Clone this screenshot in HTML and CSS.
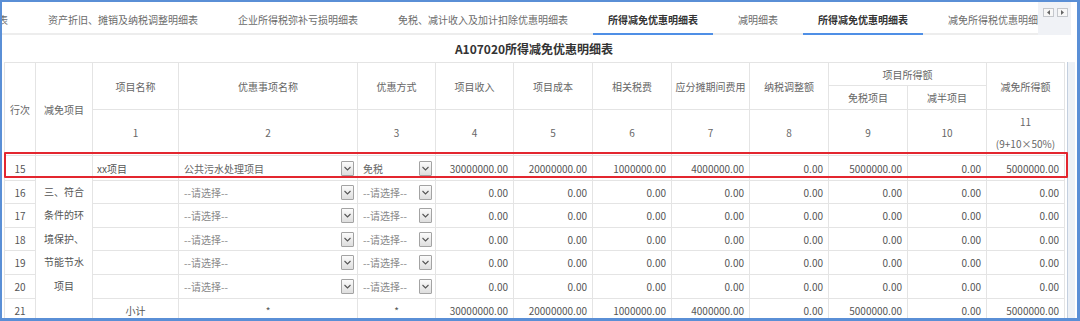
FILE: index.html
```html
<!DOCTYPE html>
<html lang="zh-CN">
<head>
<meta charset="utf-8">
<title>A107020所得减免优惠明细表</title>
<link rel="stylesheet" href="styles.css">
</head>
<body>
<div class="frame">
  <div class="tabs">
    <div class="tab-list">
      <div class="tab-track">
        <div class="tab">纳税调整明细表</div>
        <div class="tab">资产折旧、摊销及纳税调整明细表</div>
        <div class="tab">企业所得税弥补亏损明细表</div>
        <div class="tab">免税、减计收入及加计扣除优惠明细表</div>
        <div class="tab active">所得减免优惠明细表</div>
        <div class="tab">减明细表</div>
        <div class="tab active">所得减免优惠明细表</div>
        <div class="tab">减免所得税优惠明细表</div>
      </div>
    </div>
    <div class="tab-nav">
      <span class="nav-btn"><svg width="9" height="7" viewBox="0 0 9 7"><polygon points="6,1 6,6 3,3.5" fill="#666"/></svg></span>
      <span class="nav-btn"><svg width="9" height="7" viewBox="0 0 9 7"><polygon points="3,1 3,6 6,3.5" fill="#666"/></svg></span>
    </div>
  </div>
  <div class="body">
    <div class="main">
      <div class="title">A107020所得减免优惠明细表</div>
      <div class="table-wrap">
        <table class="grid">
          <colgroup>
            <col class="w31"><col class="w57"><col class="w86"><col class="w179"><col class="w78">
            <col class="w78"><col class="w79"><col class="w79"><col class="w78"><col class="w79">
            <col class="w79"><col class="w79"><col class="w78">
          </colgroup>
          <thead>
            <tr class="ha">
              <th rowspan="3">行次</th>
              <th rowspan="3">减免项目</th>
              <th rowspan="2">项目名称</th>
              <th rowspan="2">优惠事项名称</th>
              <th rowspan="2">优惠方式</th>
              <th rowspan="2">项目收入</th>
              <th rowspan="2">项目成本</th>
              <th rowspan="2">相关税费</th>
              <th rowspan="2">应分摊期间费用</th>
              <th rowspan="2">纳税调整额</th>
              <th colspan="2">项目所得额</th>
              <th rowspan="2">减免所得额</th>
            </tr>
            <tr class="hb">
              <th>免税项目</th>
              <th>减半项目</th>
            </tr>
            <tr class="hc">
              <th>1</th><th>2</th><th>3</th><th>4</th><th>5</th><th>6</th><th>7</th><th>8</th><th>9</th><th>10</th>
              <th class="two">11<br>(9+10×50%)</th>
            </tr>
          </thead>
          <tbody>
            <tr class="r15">
              <td>15</td>
              <td rowspan="7" class="cat">三、符合<br>条件的环<br>境保护、<br>节能节水<br>项目</td>
              <td class="txt">xx项目</td>
              <td><div class="sel"><span>公共污水处理项目</span><span class="dd"><svg width="11" height="13" viewBox="0 0 11 13"><polyline points="2.5,5 5.5,8 8.5,5" fill="none" stroke="#555" stroke-width="1.1"/></svg></span></div></td>
              <td><div class="sel"><span>免税</span><span class="dd"><svg width="11" height="13" viewBox="0 0 11 13"><polyline points="2.5,5 5.5,8 8.5,5" fill="none" stroke="#555" stroke-width="1.1"/></svg></span></div></td>
              <td class="num">30000000.00</td>
              <td class="num">20000000.00</td>
              <td class="num">1000000.00</td>
              <td class="num">4000000.00</td>
              <td class="num">0.00</td>
              <td class="num">5000000.00</td>
              <td class="num">0.00</td>
              <td class="num">5000000.00</td>
            </tr>
            <tr class="rb">
              <td>16</td>
              <td></td>
              <td><div class="sel ph"><span>--请选择--</span><span class="dd"><svg width="11" height="13" viewBox="0 0 11 13"><polyline points="2.5,5 5.5,8 8.5,5" fill="none" stroke="#555" stroke-width="1.1"/></svg></span></div></td>
              <td><div class="sel ph"><span>--请选择--</span><span class="dd"><svg width="11" height="13" viewBox="0 0 11 13"><polyline points="2.5,5 5.5,8 8.5,5" fill="none" stroke="#555" stroke-width="1.1"/></svg></span></div></td>
              <td class="num">0.00</td><td class="num">0.00</td><td class="num">0.00</td><td class="num">0.00</td>
              <td class="num">0.00</td><td class="num">0.00</td><td class="num">0.00</td><td class="num">0.00</td>
            </tr>
            <tr class="ra">
              <td>17</td>
              <td></td>
              <td><div class="sel ph"><span>--请选择--</span><span class="dd"><svg width="11" height="13" viewBox="0 0 11 13"><polyline points="2.5,5 5.5,8 8.5,5" fill="none" stroke="#555" stroke-width="1.1"/></svg></span></div></td>
              <td><div class="sel ph"><span>--请选择--</span><span class="dd"><svg width="11" height="13" viewBox="0 0 11 13"><polyline points="2.5,5 5.5,8 8.5,5" fill="none" stroke="#555" stroke-width="1.1"/></svg></span></div></td>
              <td class="num">0.00</td><td class="num">0.00</td><td class="num">0.00</td><td class="num">0.00</td>
              <td class="num">0.00</td><td class="num">0.00</td><td class="num">0.00</td><td class="num">0.00</td>
            </tr>
            <tr class="rb">
              <td>18</td>
              <td></td>
              <td><div class="sel ph"><span>--请选择--</span><span class="dd"><svg width="11" height="13" viewBox="0 0 11 13"><polyline points="2.5,5 5.5,8 8.5,5" fill="none" stroke="#555" stroke-width="1.1"/></svg></span></div></td>
              <td><div class="sel ph"><span>--请选择--</span><span class="dd"><svg width="11" height="13" viewBox="0 0 11 13"><polyline points="2.5,5 5.5,8 8.5,5" fill="none" stroke="#555" stroke-width="1.1"/></svg></span></div></td>
              <td class="num">0.00</td><td class="num">0.00</td><td class="num">0.00</td><td class="num">0.00</td>
              <td class="num">0.00</td><td class="num">0.00</td><td class="num">0.00</td><td class="num">0.00</td>
            </tr>
            <tr class="ra">
              <td>19</td>
              <td></td>
              <td><div class="sel ph"><span>--请选择--</span><span class="dd"><svg width="11" height="13" viewBox="0 0 11 13"><polyline points="2.5,5 5.5,8 8.5,5" fill="none" stroke="#555" stroke-width="1.1"/></svg></span></div></td>
              <td><div class="sel ph"><span>--请选择--</span><span class="dd"><svg width="11" height="13" viewBox="0 0 11 13"><polyline points="2.5,5 5.5,8 8.5,5" fill="none" stroke="#555" stroke-width="1.1"/></svg></span></div></td>
              <td class="num">0.00</td><td class="num">0.00</td><td class="num">0.00</td><td class="num">0.00</td>
              <td class="num">0.00</td><td class="num">0.00</td><td class="num">0.00</td><td class="num">0.00</td>
            </tr>
            <tr class="ra">
              <td>20</td>
              <td></td>
              <td><div class="sel ph"><span>--请选择--</span><span class="dd"><svg width="11" height="13" viewBox="0 0 11 13"><polyline points="2.5,5 5.5,8 8.5,5" fill="none" stroke="#555" stroke-width="1.1"/></svg></span></div></td>
              <td><div class="sel ph"><span>--请选择--</span><span class="dd"><svg width="11" height="13" viewBox="0 0 11 13"><polyline points="2.5,5 5.5,8 8.5,5" fill="none" stroke="#555" stroke-width="1.1"/></svg></span></div></td>
              <td class="num">0.00</td><td class="num">0.00</td><td class="num">0.00</td><td class="num">0.00</td>
              <td class="num">0.00</td><td class="num">0.00</td><td class="num">0.00</td><td class="num">0.00</td>
            </tr>
            <tr class="rb">
              <td>21</td>
              <td>小计</td>
              <td>*</td>
              <td>*</td>
              <td class="num">30000000.00</td>
              <td class="num">20000000.00</td>
              <td class="num">1000000.00</td>
              <td class="num">4000000.00</td>
              <td class="num">0.00</td>
              <td class="num">5000000.00</td>
              <td class="num">0.00</td>
              <td class="num">5000000.00</td>
            </tr>
          </tbody>
        </table>
        <div class="hl"></div>
      </div>
    </div>
    <div class="vscroll"><div class="track"></div></div>
  </div>
</div>
</body>
</html>
```
FILE: styles.css
```css
html, body {
  margin: 0;
  padding: 0;
  background: #fff;
}
body {
  font-family: "Noto Sans CJK SC", "Noto Sans", "DejaVu Sans", sans-serif;
  font-size: 10px;
  color: #666;
}
.frame {
  width: 1080px;
  height: 321px;
  box-sizing: border-box;
  border-style: solid;
  border-color: #5a8fd6;
  border-width: 2px 3px 3px 2px;
  overflow: hidden;
  display: flex;
  flex-direction: column;
}

/* tabs */
.tabs {
  flex: none;
  height: 33px;
  display: flex;
  padding-right: 6px;
}
.tab-list {
  flex: 1;
  min-width: 0;
  overflow: hidden;
  box-shadow: inset 0 -2px 0 #ededed;
}
.tab-track {
  display: flex;
  gap: 10px;
  margin-left: -79px;
  white-space: nowrap;
}
.tab {
  flex: none;
  height: 33px;
  box-sizing: border-box;
  padding: 4px 15px 0;
  line-height: 27px;
  border-bottom: 2px solid transparent;
  color: #6b6b6b;
}
.tab.active {
  color: #333;
  font-weight: bold;
  border-bottom-color: #4f8fe6;
}
.tab-nav {
  flex: none;
  width: 33px;
  box-sizing: border-box;
  background: #f0f2f6;
  display: flex;
  align-items: flex-start;
  gap: 3px;
  padding: 6px 3px 0 5px;
}
.nav-btn {
  width: 11px;
  height: 9px;
  box-sizing: border-box;
  border: 1px solid #c4c7cc;
  background: #f7f7f7;
  display: flex;
  align-items: center;
  justify-content: center;
}
.nav-btn svg { display: block; }

/* body */
.body {
  flex: 1;
  min-height: 0;
  display: flex;
}
.main {
  flex: none;
  width: 1062px;
  box-sizing: border-box;
  padding-left: 2px;
}
.title {
  height: 27px;
  line-height: 27px;
  text-align: center;
  font-size: 12px;
  font-weight: bold;
  color: #333;
}
.table-wrap {
  position: relative;
}
.grid {
  width: 1060px;
  table-layout: fixed;
  border-collapse: collapse;
}
.w31 { width: 31px; }
.w57 { width: 57px; }
.w86 { width: 86px; }
.w179 { width: 179px; }
.w78 { width: 78px; }
.w79 { width: 79px; }
.grid th, .grid td {
  border: 1px solid #e4e4e4;
  padding: 0;
  font-weight: normal;
  text-align: center;
  white-space: nowrap;
  overflow: hidden;
  color: #666;
}
.grid td { color: #555; }
.ha { height: 23px; }
.hb { height: 24px; }
.hc { height: 43px; }
.grid th.two {
  line-height: 22px;
  padding-top: 1px;
}
.r15 { height: 25px; }
.ra { height: 24px; }
.rb { height: 23px; }
.grid td.num {
  text-align: right;
  padding-right: 5px;
}
.grid td.txt {
  text-align: left;
  padding-left: 4px;
}
.grid td.cat {
  white-space: normal;
  line-height: 23.4px;
  vertical-align: middle;
}
.sel {
  display: flex;
  align-items: center;
  justify-content: space-between;
  padding: 0 3px 0 5px;
  color: #666;
}
.sel.ph { color: #888; }
.dd {
  width: 13px;
  height: 15px;
  box-sizing: border-box;
  border: 1px solid #a3a3a3;
  border-radius: 1px;
  background: linear-gradient(#fbfbfb, #dedede);
  display: flex;
  align-items: center;
  justify-content: center;
}
.dd svg { display: block; }
.hl {
  position: absolute;
  left: 0;
  top: 90px;
  width: 1064px;
  height: 26px;
  box-sizing: border-box;
  border: 2px solid #e3262f;
  border-radius: 1px;
  pointer-events: none;
}

/* right scroll strip */
.vscroll {
  flex: 1;
  padding-top: 27px;
  box-sizing: border-box;
}
.vscroll .track {
  margin-left: 3px;
  width: 7px;
  height: 100%;
  background: #edf1f6;
  border-left: 1px solid #c3cfdf;
}
```
